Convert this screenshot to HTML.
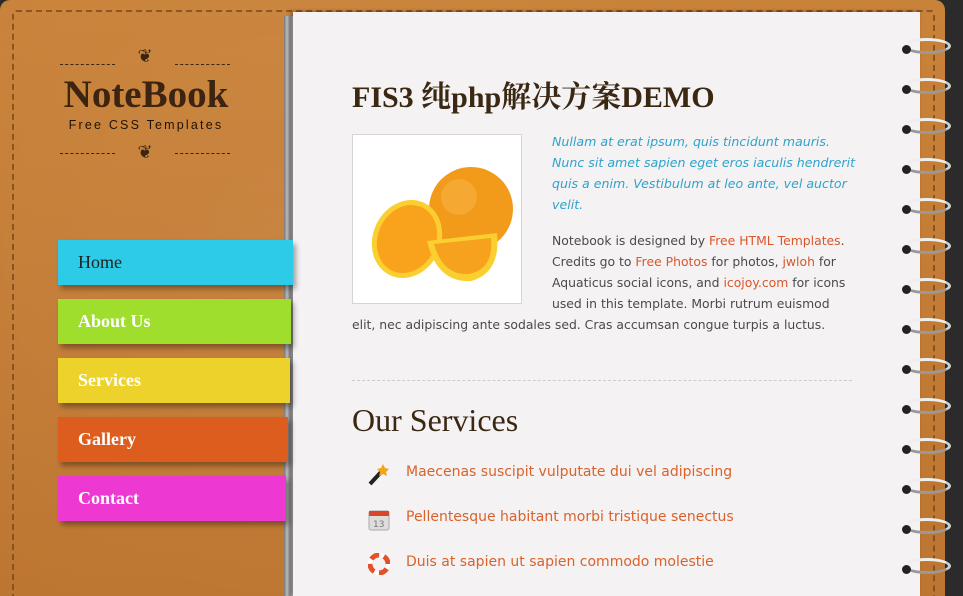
<!DOCTYPE html>
<html><head><meta charset="utf-8"><style>
*{margin:0;padding:0;box-sizing:border-box}
html,body{width:963px;height:596px;overflow:hidden}
body{background:#2b2b2b;position:relative;font-family:"DejaVu Sans","Liberation Sans",sans-serif}
.leather{position:absolute;left:0;top:0;width:945px;height:596px;border-radius:10px 10px 0 0;overflow:hidden;
background-image:radial-gradient(circle at 30% 40%,rgba(255,255,255,.05),transparent 60%),linear-gradient(180deg,#c98239,#bd7631);}
.stitch{position:absolute;left:12px;top:10px;right:10px;height:620px;border:2px dashed #6e431a;border-radius:4px;opacity:.7}
.pages{position:absolute;left:284px;top:16px;width:12px;height:580px;background:linear-gradient(90deg,#777,#bbb,#888,#ccc,#999)}
.paper{position:absolute;left:293px;top:12px;width:627px;height:584px;background:#f4f2f3;box-shadow:-2px 0 4px rgba(0,0,0,.4)}
.ring{position:absolute;left:903px;width:48px;height:16px;border:3px solid #cfcfcf;border-left-color:transparent;border-radius:50%;border-top-color:#eee;border-bottom-color:#999}
.ring:before{content:"";position:absolute;left:-4px;top:4px;width:9px;height:9px;border-radius:50%;background:#222}
.logo{position:absolute;left:40px;top:72px;width:212px;text-align:center;font-family:"Liberation Serif",serif;font-weight:bold;font-size:39px;color:#3d2410}
.sub{position:absolute;left:46px;top:118px;width:200px;text-align:center;font-family:"Liberation Sans",sans-serif;font-size:12.5px;color:#1e1206;letter-spacing:2.2px}
.dash{position:absolute;height:0;border-top:1px dashed #3d2410;width:55px}
.orn{position:absolute;font-size:18px;color:#3d2410;width:40px;text-align:center}
.tab{position:absolute;left:58px;height:45px;font-family:"Liberation Serif",serif;font-weight:bold;font-size:18px;color:#fff;padding:12px 0 0 20px;box-shadow:3px 4px 5px rgba(0,0,0,.35)}
h1{position:absolute;left:352px;top:72px;font-family:"Liberation Serif","Noto Serif CJK SC",serif;font-weight:bold;font-size:30px;color:#3b2812}
h2{position:absolute;left:352px;top:402px;font-family:"Liberation Serif",serif;font-weight:normal;font-size:32px;color:#3b2812}
.img{position:absolute;left:352px;top:134px;width:170px;height:170px;border:1px solid #d8d4d4;background:#fff;padding:6px}
.t{position:absolute;font-size:12.4px;line-height:21px;color:#4a4a4a;white-space:nowrap}
.i{color:#2fa3cc;font-style:italic;font-size:12.6px}
a{color:#d9572a;text-decoration:none}
.hr{position:absolute;left:352px;top:380px;width:500px;border-top:1px dashed #ccc}
.li{position:absolute;left:406px;font-size:14px;color:#d9622a}
</style></head><body>
<div class="leather"><div class="stitch"></div></div>
<div class="pages"></div>
<div class="paper"></div>
<div class="ring" style="top:38px"></div><div class="ring" style="top:78px"></div><div class="ring" style="top:118px"></div><div class="ring" style="top:158px"></div><div class="ring" style="top:198px"></div><div class="ring" style="top:238px"></div><div class="ring" style="top:278px"></div><div class="ring" style="top:318px"></div><div class="ring" style="top:358px"></div><div class="ring" style="top:398px"></div><div class="ring" style="top:438px"></div><div class="ring" style="top:478px"></div><div class="ring" style="top:518px"></div><div class="ring" style="top:558px"></div>

<div class="dash" style="left:60px;top:64px"></div><div class="orn" style="left:125px;top:46px">❦</div><div class="dash" style="left:175px;top:64px"></div>
<div class="logo">NoteBook</div>
<div class="sub">Free CSS Templates</div>
<div class="dash" style="left:60px;top:153px"></div><div class="orn" style="left:125px;top:142px">❦</div><div class="dash" style="left:175px;top:153px"></div>

<div class="tab" style="top:240px;width:235px;background:#2ecbe9;color:#222;font-weight:normal">Home</div>
<div class="tab" style="top:299px;width:233px;background:#9fde2c">About Us</div>
<div class="tab" style="top:358px;width:232px;background:#ecd22b">Services</div>
<div class="tab" style="top:417px;width:230px;background:#dd5d1f">Gallery</div>
<div class="tab" style="top:476px;width:228px;background:#ee38d2">Contact</div>

<h1>FIS3 纯php解决方案DEMO</h1>
<div class="img"><svg width="156" height="156" viewBox="0 0 156 156">
<circle cx="112" cy="68" r="42" fill="#f29a1a"/><circle cx="100" cy="56" r="18" fill="#f7b64a" opacity=".5"/>
<ellipse cx="48" cy="98" rx="34" ry="40" fill="#fbcf2f" transform="rotate(25 48 98)"/><ellipse cx="48" cy="98" rx="29" ry="35" fill="#f9a21c" transform="rotate(25 48 98)"/>
<path d="M68 100 L138 92 Q142 132 112 140 Q78 142 68 100Z" fill="#fbcf2f"/><path d="M75 103 L132 97 Q135 128 110 133 Q84 135 75 103Z" fill="#f7a21e"/>
</svg></div>
<div class="t i" style="left:552px;top:131px">Nullam at erat ipsum, quis tincidunt mauris.</div>
<div class="t i" style="left:552px;top:152px">Nunc sit amet sapien eget eros iaculis hendrerit</div>
<div class="t i" style="left:552px;top:173px">quis a enim. Vestibulum at leo ante, vel auctor</div>
<div class="t i" style="left:552px;top:194px">velit.</div>
<div class="t" style="left:552px;top:230px">Notebook is designed by <a>Free HTML Templates</a>.</div>
<div class="t" style="left:552px;top:251px">Credits go to <a>Free Photos</a> for photos, <a>jwloh</a> for</div>
<div class="t" style="left:552px;top:272px">Aquaticus social icons, and <a>icojoy.com</a> for icons</div>
<div class="t" style="left:552px;top:293px">used in this template. Morbi rutrum euismod</div>
<div class="t" style="left:352px;top:314px">elit, nec adipiscing ante sodales sed. Cras accumsan congue turpis a luctus.</div>
<div class="hr"></div>
<h2>Our Services</h2>
<svg style="position:absolute;left:367px;top:462px" width="24" height="24"><path d="M3 22 L15 9" stroke="#222" stroke-width="4"/><path d="M16 2l2 4 4 1-3 3 1 4-4-2-4 2 1-4-3-3 4-1z" fill="#f2a51b"/></svg>
<div class="li" style="top:464px">Maecenas suscipit vulputate dui vel adipiscing</div>
<svg style="position:absolute;left:368px;top:508px" width="22" height="23"><rect x="1" y="3" width="20" height="19" rx="2" fill="#ddd" stroke="#aaa"/><rect x="1" y="3" width="20" height="5" fill="#d9462a"/><text x="5" y="19" font-size="9" fill="#777" font-family="DejaVu Sans">13</text></svg>
<div class="li" style="top:509px">Pellentesque habitant morbi tristique senectus</div>
<svg style="position:absolute;left:368px;top:553px" width="22" height="22"><circle cx="11" cy="11" r="9" fill="none" stroke="#e2522a" stroke-width="5"/><circle cx="11" cy="11" r="9" fill="none" stroke="#fff" stroke-width="5" stroke-dasharray="5 9.1"/></svg>
<div class="li" style="top:554px">Duis at sapien ut sapien commodo molestie</div>
</body></html>
